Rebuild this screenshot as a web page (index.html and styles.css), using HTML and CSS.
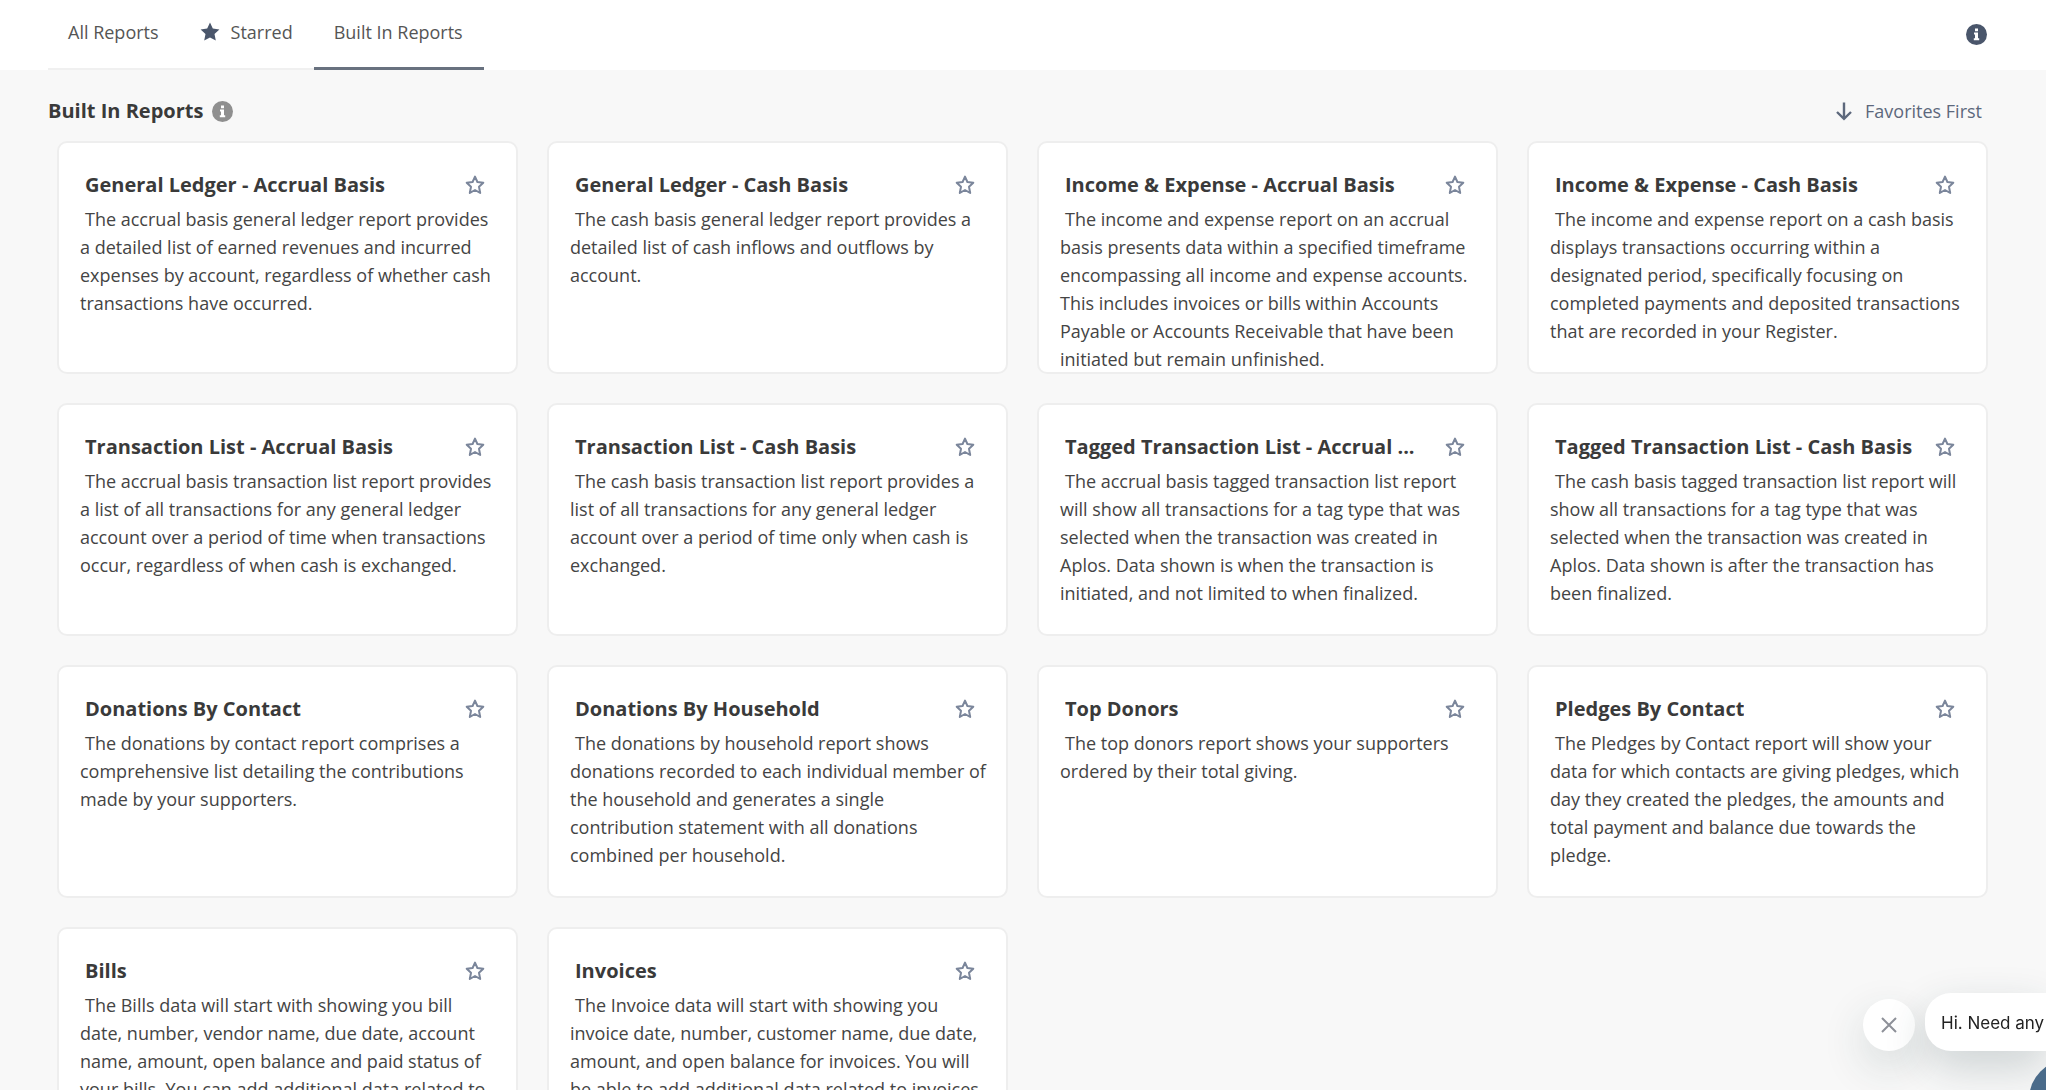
FILE: index.html
```
<!DOCTYPE html>
<html lang="en">

<head>
    <meta charset="utf-8">
    <title>Built In Reports</title>
    <link rel="stylesheet" href="styles.css">
</head>

<body>
    <svg class="sprite" aria-hidden="true">
        <symbol id="star" viewBox="0 0 20 20">
            <path d="M10 0.6l2.8 6 6.6.8-4.9 4.5 1.3 6.7L10 15.4l-5.8 3.2 1.3-6.7L.6 7.4l6.6-.8z" />
        </symbol>
        <symbol id="star-outline" viewBox="0 0 20 20">
            <path d="M10 1.6l2.4 5.4 5.9.7-4.3 4 1.2 6.3L10 15l-5.2 3L6 11.7l-4.3-4 5.9-.7z" fill="none" stroke="currentColor" stroke-width="2" stroke-linejoin="round" />
        </symbol>
        <symbol id="info" viewBox="0 0 21 21">
            <circle cx="10.5" cy="10.5" r="10.5" />
            <path d="M9 4.4h3v2.8H9zM8 8.6h4v5.6h1.2v2H7.8v-2H9v-3.6H8z" fill="#fff" />
        </symbol>
        <symbol id="arrow-down" viewBox="0 0 18 20">
            <path d="M9 1.5v16M2 11l7 6.8 7-6.8" fill="none" stroke="currentColor" stroke-width="2.4" />
        </symbol>
    </svg>

    <div class="page">
        <header class="header">
            <nav class="tabs">
                <a class="tab" href="#all">All Reports</a>
                <a class="tab" href="#starred"><svg class="icon"><use href="#star" /></svg>Starred</a>
                <a class="tab active" href="#builtin">Built In Reports</a>
            </nav>
            <button class="icon-btn" aria-label="Help"><svg class="icon-info"><use href="#info" /></svg></button>
        </header>

        <main class="content">
            <div class="toolbar">
                <h1 class="heading">Built In Reports <svg class="icon-info gray"><use href="#info" /></svg></h1>
                <button class="sort"><svg class="icon-arrow"><use href="#arrow-down" /></svg>Favorites First</button>
            </div>

            <div class="cards">
                <article class="card">
                    <div class="card-head">
                        <h2 class="card-title">General Ledger - Accrual Basis</h2>
                        <button class="icon-btn star" aria-label="Star"><svg class="icon"><use href="#star-outline" /></svg></button>
                    </div>
                    <p class="card-text">The accrual basis general ledger report provides a detailed list of earned revenues and incurred expenses by account, regardless of whether cash transactions have occurred.</p>
                </article>
                <article class="card">
                    <div class="card-head">
                        <h2 class="card-title">General Ledger - Cash Basis</h2>
                        <button class="icon-btn star" aria-label="Star"><svg class="icon"><use href="#star-outline" /></svg></button>
                    </div>
                    <p class="card-text">The cash basis general ledger report provides a detailed list of cash inflows and outflows by account.</p>
                </article>
                <article class="card">
                    <div class="card-head">
                        <h2 class="card-title">Income &amp; Expense - Accrual Basis</h2>
                        <button class="icon-btn star" aria-label="Star"><svg class="icon"><use href="#star-outline" /></svg></button>
                    </div>
                    <p class="card-text">The income and expense report on an accrual basis presents data within a specified timeframe encompassing all income and expense accounts. This includes invoices or bills within Accounts Payable or Accounts Receivable that have been initiated but remain unfinished.</p>
                </article>
                <article class="card">
                    <div class="card-head">
                        <h2 class="card-title">Income &amp; Expense - Cash Basis</h2>
                        <button class="icon-btn star" aria-label="Star"><svg class="icon"><use href="#star-outline" /></svg></button>
                    </div>
                    <p class="card-text">The income and expense report on a cash basis displays transactions occurring within a designated period, specifically focusing on completed payments and deposited transactions that are recorded in your Register.</p>
                </article>

                <article class="card">
                    <div class="card-head">
                        <h2 class="card-title">Transaction List - Accrual Basis</h2>
                        <button class="icon-btn star" aria-label="Star"><svg class="icon"><use href="#star-outline" /></svg></button>
                    </div>
                    <p class="card-text">The accrual basis transaction list report provides a list of all transactions for any general ledger account over a period of time when transactions occur, regardless of when cash is exchanged.</p>
                </article>
                <article class="card">
                    <div class="card-head">
                        <h2 class="card-title">Transaction List - Cash Basis</h2>
                        <button class="icon-btn star" aria-label="Star"><svg class="icon"><use href="#star-outline" /></svg></button>
                    </div>
                    <p class="card-text">The cash basis transaction list report provides a list of all transactions for any general ledger account over a period of time only when cash is exchanged.</p>
                </article>
                <article class="card">
                    <div class="card-head">
                        <h2 class="card-title">Tagged Transaction List - Accrual ...</h2>
                        <button class="icon-btn star" aria-label="Star"><svg class="icon"><use href="#star-outline" /></svg></button>
                    </div>
                    <p class="card-text">The accrual basis tagged transaction list report will show all transactions for a tag type that was selected when the transaction was created in Aplos. Data shown is when the transaction is initiated, and not limited to when finalized.</p>
                </article>
                <article class="card">
                    <div class="card-head">
                        <h2 class="card-title">Tagged Transaction List - Cash Basis</h2>
                        <button class="icon-btn star" aria-label="Star"><svg class="icon"><use href="#star-outline" /></svg></button>
                    </div>
                    <p class="card-text">The cash basis tagged transaction list report will show all transactions for a tag type that was selected when the transaction was created in Aplos. Data shown is after the transaction has been finalized.</p>
                </article>

                <article class="card">
                    <div class="card-head">
                        <h2 class="card-title">Donations By Contact</h2>
                        <button class="icon-btn star" aria-label="Star"><svg class="icon"><use href="#star-outline" /></svg></button>
                    </div>
                    <p class="card-text">The donations by contact report comprises a comprehensive list detailing the contributions made by your supporters.</p>
                </article>
                <article class="card">
                    <div class="card-head">
                        <h2 class="card-title">Donations By Household</h2>
                        <button class="icon-btn star" aria-label="Star"><svg class="icon"><use href="#star-outline" /></svg></button>
                    </div>
                    <p class="card-text">The donations by household report shows donations recorded to each individual member of the household and generates a single contribution statement with all donations combined per household.</p>
                </article>
                <article class="card">
                    <div class="card-head">
                        <h2 class="card-title">Top Donors</h2>
                        <button class="icon-btn star" aria-label="Star"><svg class="icon"><use href="#star-outline" /></svg></button>
                    </div>
                    <p class="card-text">The top donors report shows your supporters ordered by their total giving.</p>
                </article>
                <article class="card">
                    <div class="card-head">
                        <h2 class="card-title">Pledges By Contact</h2>
                        <button class="icon-btn star" aria-label="Star"><svg class="icon"><use href="#star-outline" /></svg></button>
                    </div>
                    <p class="card-text">The Pledges by Contact report will show your data for which contacts are giving pledges, which day they created the pledges, the amounts and total payment and balance due towards the pledge.</p>
                </article>

                <article class="card">
                    <div class="card-head">
                        <h2 class="card-title">Bills</h2>
                        <button class="icon-btn star" aria-label="Star"><svg class="icon"><use href="#star-outline" /></svg></button>
                    </div>
                    <p class="card-text">The Bills data will start with showing you bill date, number, vendor name, due date, account name, amount, open balance and paid status of your bills. You can add additional data related to</p>
                </article>
                <article class="card">
                    <div class="card-head">
                        <h2 class="card-title">Invoices</h2>
                        <button class="icon-btn star" aria-label="Star"><svg class="icon"><use href="#star-outline" /></svg></button>
                    </div>
                    <p class="card-text">The Invoice data will start with showing you invoice date, number, customer name, due date, amount, and open balance for invoices. You will be able to add additional data related to invoices</p>
                </article>
            </div>
        </main>
    </div>

    <!-- chat widget -->
    <div class="chat">
        <button class="chat-close" aria-label="Close"><svg viewBox="0 0 16 16"><path d="M1 1l14 14M15 1L1 15" /></svg></button>
        <div class="chat-message">Hi. Need any</div>
    </div>
    <button class="chat-launcher" aria-label="Open chat"></button>
</body>

</html>
```
FILE: styles.css
```
* {
    box-sizing: border-box;
    margin: 0;
}

body {
    font: 18px/28px "Open Sans", "Noto Sans", sans-serif;
    color: #444;
    background: #f8f8f8;
}

button {
    font: inherit;
    border: 0;
    padding: 0;
    background: none;
    cursor: pointer;
}

.sprite {
    display: none;
}

.page {
    height: 100vh;
    overflow: hidden auto;
    scrollbar-width: none;
}

.header {
    display: flex;
    justify-content: space-between;
    padding: 0 59px 0 48px;
    background: #fff;
}

.header .icon-btn {
    padding-bottom: 2px;
}

.tabs {
    display: flex;
}

.tab {
    display: flex;
    align-items: center;
    gap: 11px;
    padding: 18px 21px 22px 20px;
    border-bottom: 2px solid #f0f0f0;
    color: #555;
    text-decoration: none;
}

.tab.active {
    padding-bottom: 21px;
    border-bottom: 3px solid #68717f;
}

.icon {
    display: block;
    width: 20px;
    height: 20px;
    fill: #4a566b;
}

.icon-info {
    display: block;
    width: 21px;
    height: 21px;
    fill: #4a566b;
}

.gray {
    fill: #8f8f8f;
}

.icon-btn {
    flex: none;
    color: #7b869b;
}

.content {
    padding: 27px 58px 29px 57px;
}

.toolbar {
    display: flex;
    justify-content: space-between;
    align-items: center;
    margin: 0 6px 16px -9px;
}

.heading {
    display: flex;
    align-items: center;
    gap: 9px;
    font-size: 20px;
    font-weight: 700;
    line-height: 28px;
    color: #3a3a3a;
}

.sort {
    display: flex;
    align-items: center;
    gap: 12px;
    color: #5d687c;
}

.icon-arrow {
    width: 18px;
    height: 20px;
}

.cards {
    display: grid;
    grid-template-columns: repeat(4, 1fr);
    grid-auto-rows: 233px;
    gap: 29px;
}

.card {
    padding: 28px 19px 0 21px;
    overflow: hidden;
    background: #fff;
    border: 2px solid #eee;
    border-radius: 10px;
}

.card-head {
    display: flex;
    justify-content: space-between;
    align-items: center;
    margin-bottom: 6px;
    padding: 0 12px 0 5px;
}

.card-title {
    overflow: hidden;
    font-size: 20px;
    font-weight: 700;
    line-height: 28px;
    white-space: nowrap;
    text-overflow: ellipsis;
    color: #3a3a3a;
}

.card-text {
    text-indent: 5px;
}

.chat {
    position: fixed;
    right: 0;
    bottom: 39px;
    display: flex;
    align-items: flex-end;
    gap: 10px;
}

.chat-close {
    display: flex;
    align-items: center;
    justify-content: center;
    width: 52px;
    height: 52px;
    background: #fff;
    border-radius: 50%;
    box-shadow: 0 16px 44px rgba(30, 60, 65, 0.16);
}

.chat-close svg {
    width: 16px;
    height: 16px;
    fill: none;
    stroke: #8e9199;
    stroke-width: 2;
}

.chat-message {
    width: 121px;
    padding: 16px 0 14px 16px;
    overflow: hidden;
    font-family: Inter, "Liberation Sans", sans-serif;
    font-size: 17px;
    white-space: nowrap;
    color: #222;
    background: #fff;
    border-radius: 26px 0 0 26px;
    box-shadow: 0 16px 44px rgba(30, 60, 65, 0.2);
}

.chat-launcher {
    position: fixed;
    right: -61px;
    bottom: -48px;
    width: 78px;
    height: 78px;
    background: #4a6b8a;
    border-radius: 50%;
}
```
